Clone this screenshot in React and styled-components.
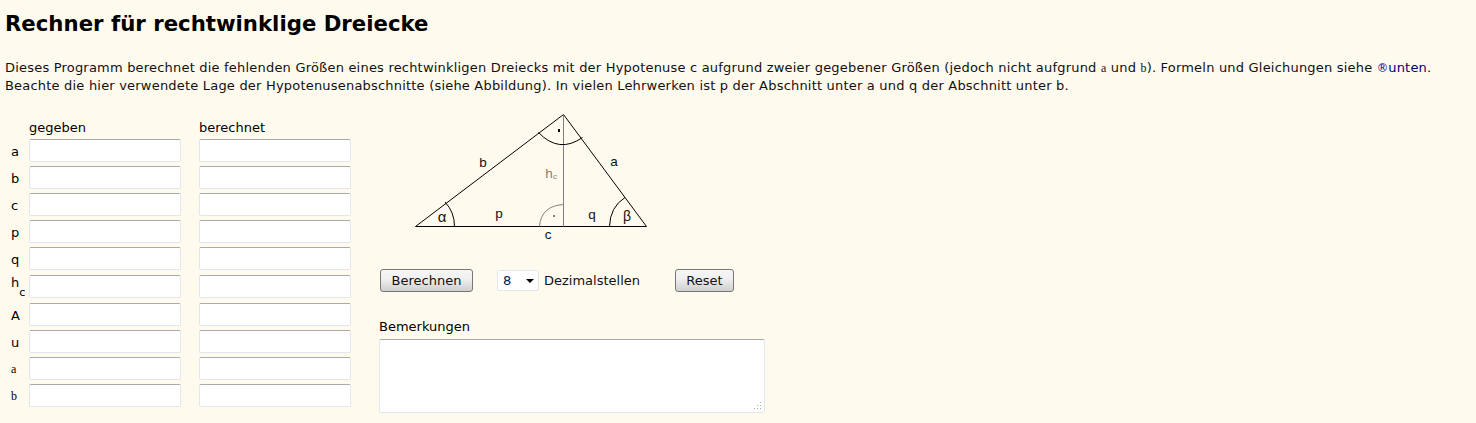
import React from "react";
import styled, { createGlobalStyle } from "styled-components";

const Global = createGlobalStyle`
  html, body { margin: 0; padding: 0; background: #fffaee; }
  body { font-family: "DejaVu Sans", Verdana, sans-serif; font-size: 13px; color: #000; overflow: hidden; }
`;
const Page = styled.div`
  width: 1476px; height: 423px; padding: 11px 0 0 5px; box-sizing: border-box; overflow: hidden;
`;
const Title = styled.h1`
  margin: 0; font-size: 21.25px; line-height: 25px; font-weight: 700; color: #000;
`;
const Intro = styled.p`
  margin: 23px 0 0; font-size: 13px; line-height: 18px; letter-spacing: 0.2px; white-space: nowrap; color: #111;
`;
const Small = styled.span`
  font-family: "Liberation Serif", serif; font-size: 12px; line-height: 0;
`;
const Link = styled.a`
  color: #000080; text-decoration: none;
`;
const Mark = styled.span`
  font-size: 11.5px; line-height: 0; color: #000080; letter-spacing: 0;
`;
const Main = styled.div`
  display: flex; margin-top: 20px; align-items: flex-start;
`;
const Head = styled.div`
  display: flex; height: 24px; padding: 4px 0 0 24px; gap: 18px; line-height: 17px; box-sizing: border-box;
`;
const HeadCell = styled.div`
  width: 152px;
`;
const Rows = styled.div`
  display: flex; flex-direction: column;
`;
const Row = styled.div`
  display: flex; align-items: flex-start; height: ${p => p.$h || 27}px; gap: 18px; padding-left: 24px; position: relative;
`;
const RowLabel = styled.span`
  position: absolute; left: 6px; top: ${p => p.$top ?? 4}px; line-height: 17px; font-size: ${p => p.$small ? "12px" : "13px"};
  font-family: ${p => p.$small ? '"Liberation Serif", serif' : 'inherit'};
`;
const Sub = styled.span`
  position: relative; top: 9px; font-size: 11px;
`;
const Field = styled.input`
  width: 152px; height: 23px; box-sizing: border-box; background: #fff; margin: 0;
  border: 1px solid #e3e6ec; border-top-color: #aaa; border-radius: 2px; outline: none;
`;
const Side = styled.div`
  margin-left: 28px; margin-top: -5px; display: flex; flex-direction: column; align-items: flex-start;
`;
const Diagram = styled.svg`
  display: block; margin-left: 31px;
`;
const Controls = styled.div`
  display: flex; align-items: center; margin-top: 24px; margin-left: 1px;
`;
const Button = styled.button`
  font: 13px "DejaVu Sans", sans-serif; color: #111; height: 23px; padding: 0;
  width: ${p => p.$w}px; border: 1px solid #777; border-radius: 3px;
  background: linear-gradient(#f6f6f6, #f0f0f0 40%, #cfcfcf);
`;
const SelectBox = styled.div`
  position: relative; margin-left: 24px; width: 42px; height: 21px; box-sizing: border-box; background: #fff;
  border: 1px solid #e3e6ec; border-radius: 2px; font-size: 13px; line-height: 19px; padding-left: 5px; color: #00205c;
`;
const Arrow = styled.span`
  position: absolute; right: 4px; top: 8px; border: 4px solid transparent; border-top: 4px solid #000; border-bottom: 0;
`;
const ControlText = styled.span`
  margin-left: 5px; width: 131px; color: #111;
`;
const NotesLabel = styled.div`
  margin-top: 26px; line-height: 17px; margin-bottom: 4px;
`;
const NotesBox = styled.div`
  position: relative; width: 386px; height: 74px;
`;
const Notes = styled.textarea`
  display: block; width: 100%; height: 100%; box-sizing: border-box; margin: 0; background: #fff; resize: none;
  border: 1px solid #e3e6ec; border-top-color: #aaa; border-radius: 2px; outline: none;
`;
const Grip = styled.svg`
  position: absolute; right: 3px; bottom: 3px; display: block;
`;

const rows = [
  ["a"], ["b"], ["c"], ["p"], ["q", 28], ["hc", 28], ["A"], ["u"], ["a", 27, true], ["b", 27, true],
];

function Triangle() {
  const ink = "#000";
  const grey = "#808080";
  const textProps = { fontFamily: '"Liberation Sans", sans-serif', fontSize: 13.5, fill: "#111", textAnchor: "middle" };
  return (
    <Diagram width="240" height="135" viewBox="410 110 240 135">
      <path d="M415.5 226.5H646.5L563.5 114.5Z" fill="none" stroke={ink} />
      <path d="M563.5 114.5V226.5" stroke={grey} />
      <path d="M538.5 132.5Q559 154 582.5 137.5" fill="none" stroke={ink} />
      <path d="M445 202Q454.5 212 454.5 226.5" fill="none" stroke={ink} />
      <path d="M609.5 226.5Q610 207 625 197.5" fill="none" stroke={ink} />
      <path d="M539.5 226.5Q541 206 563.5 204.5" fill="none" stroke={grey} />
      <rect x="558" y="129" width="2" height="3" fill={ink} />
      <rect x="553" y="215" width="2" height="2" fill={grey} />
      <text x="483" y="167" {...textProps}>b</text>
      <text x="614" y="166" {...textProps}>a</text>
      <text x="549" y="178" {...textProps} fill={grey}>h</text>
      <text x="555" y="179" {...textProps} fontSize={8} fill={grey}>c</text>
      <text x="499" y="218" {...textProps}>p</text>
      <text x="592" y="219" {...textProps}>q</text>
      <text x="548" y="239" {...textProps}>c</text>
      <text x="442" y="222" {...textProps} fontSize={15}>α</text>
      <text x="627" y="221" {...textProps} fontSize={14}>β</text>
    </Diagram>
  );
}

export default function App() {
  return (
    <Page>
      <Global />
      <Title>Rechner für rechtwinklige Dreiecke</Title>
      <Intro>
        Dieses Programm berechnet die fehlenden Größen eines rechtwinkligen Dreiecks mit der Hypotenuse c aufgrund zweier gegebener Größen (jedoch nicht aufgrund <Small>a</Small> und <Small>b</Small>). Formeln und Gleichungen siehe <Link href="#"><Mark>®</Mark>unten</Link>.
        <br />
        Beachte die hier verwendete Lage der Hypotenusenabschnitte (siehe Abbildung). In vielen Lehrwerken ist p der Abschnitt unter a und q der Abschnitt unter b.
      </Intro>
      <Main>
        <div>
          <Head><HeadCell>gegeben</HeadCell><HeadCell>berechnet</HeadCell></Head>
          <Rows>
            {rows.map(([label, h, small], i) => (
              <Row key={i} $h={h}>
                <RowLabel $small={small} $top={label === "hc" ? -1 : undefined}>
                  {label === "hc" ? <>h<Sub>c</Sub></> : label}
                </RowLabel>
                <Field />
                <Field />
              </Row>
            ))}
          </Rows>
        </div>
        <Side>
          <Triangle />
          <Controls>
            <Button $w={93}>Berechnen</Button>
            <SelectBox>8<Arrow /></SelectBox>
            <ControlText>Dezimalstellen</ControlText>
            <Button $w={59}>Reset</Button>
          </Controls>
          <NotesLabel>Bemerkungen</NotesLabel>
          <NotesBox>
            <Notes />
            <Grip width="8" height="8" viewBox="0 0 8 8" fill="#aaa">
              <rect x="6" y="0" width="1" height="1" />
              <rect x="3" y="3" width="1" height="1" /><rect x="6" y="3" width="1" height="1" />
              <rect x="0" y="6" width="1" height="1" /><rect x="3" y="6" width="1" height="1" /><rect x="6" y="6" width="1" height="1" />
            </Grip>
          </NotesBox>
        </Side>
      </Main>
    </Page>
  );
}
